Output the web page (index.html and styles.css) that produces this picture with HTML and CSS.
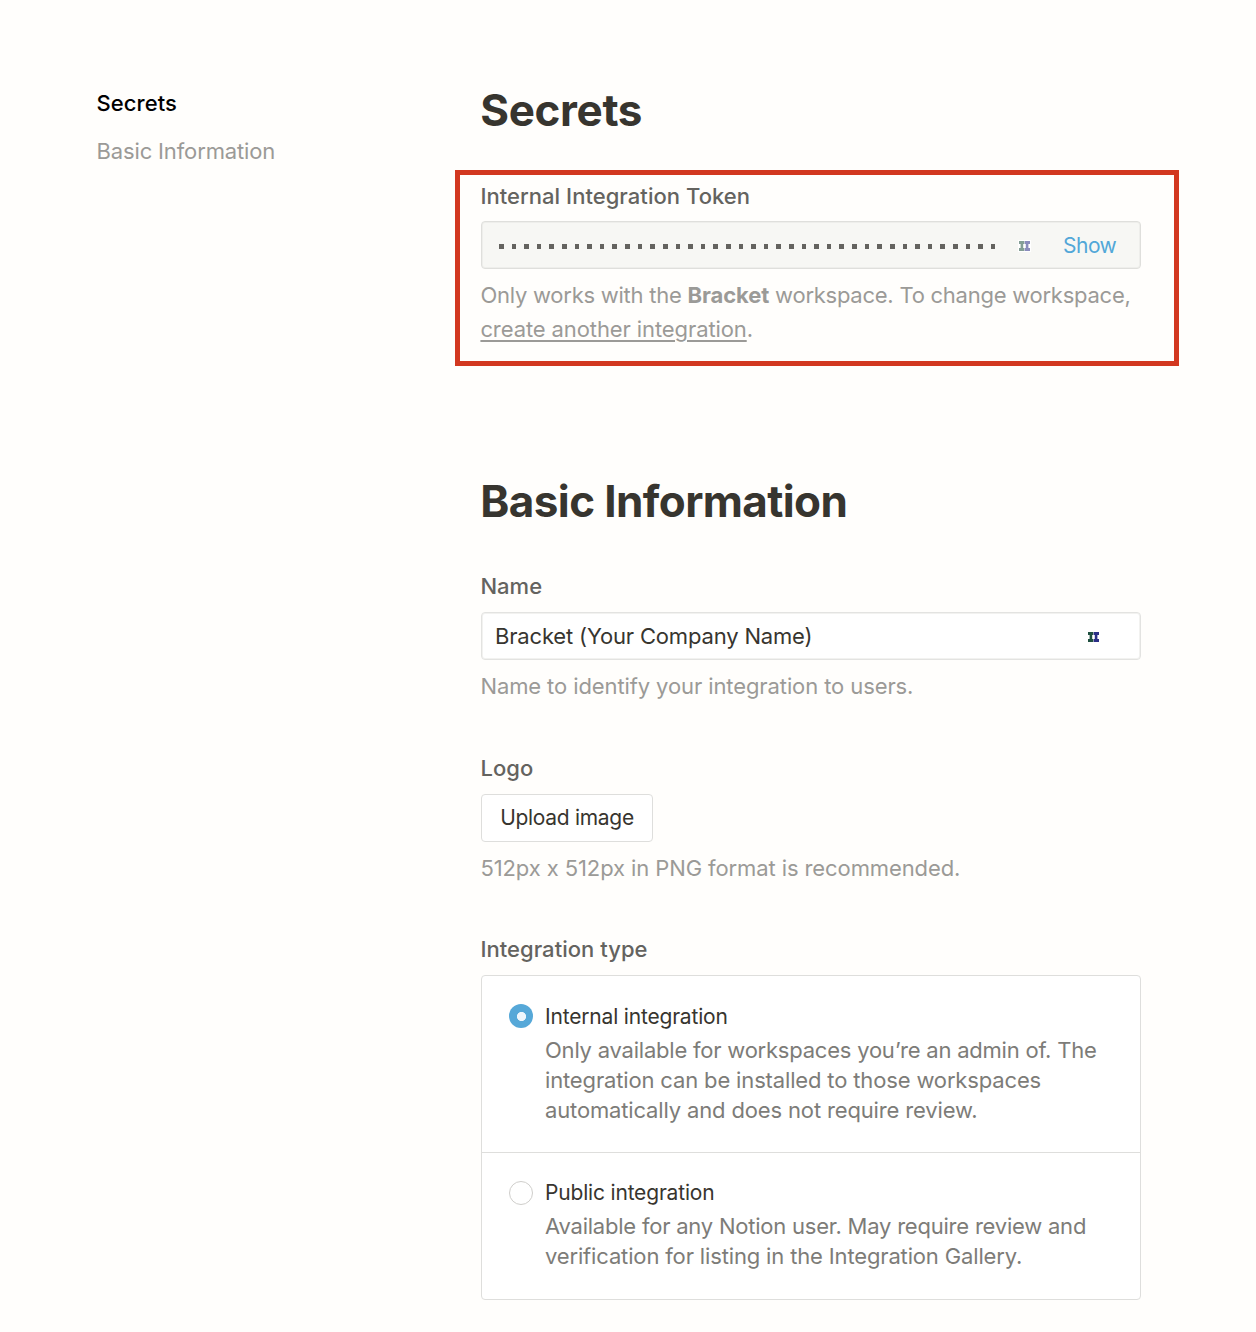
FILE: index.html
```html
<!DOCTYPE html>
<html lang="en">
<head>
<meta charset="utf-8">
<title>Integration settings</title>
<link rel="stylesheet" href="styles.css">
</head>
<body>
<div class="page">
  <nav class="sidebar">
    <a class="nav-link nav-link-active">Secrets</a>
    <a class="nav-link">Basic Information</a>
  </nav>
  <main class="content">
    <h1 class="title">Secrets</h1>
    <section class="callout">
      <div class="label">Internal Integration Token</div>
      <div class="field field-token">
        <span class="dots"></span>
        <span class="mark-tile">
          <svg class="mark" viewBox="0 0 11 10"><path fill="#1f4f3f" d="M0 0h5.300v3H4.200v4h1.100v3H0V7h1.600V3H0z"/><path fill="#2b2f86" d="M5.700 0H11v3H9.400v4H11v3H5.700V7h1.100V3H5.700z"/></svg>
        </span>
        <a class="show">Show</a>
      </div>
      <p class="help"><span class="help-workspace">Only works with the <b>Bracket</b> workspace. To change workspace,</span><br><a class="link">create another integration</a>.</p>
    </section>
    <h1 class="title title-basic">Basic Information</h1>
    <section class="group">
      <div class="label">Name</div>
      <div class="field">
        <span class="value">Bracket (Your Company Name)</span>
        <svg class="mark mark-name" viewBox="0 0 11 10"><path fill="#1f4f3f" d="M0 0h5.300v3H4.200v4h1.100v3H0V7h1.600V3H0z"/><path fill="#2b2f86" d="M5.700 0H11v3H9.400v4H11v3H5.700V7h1.100V3H5.700z"/></svg>
      </div>
      <p class="help">Name to identify your integration to users.</p>
    </section>
    <section class="group group-logo">
      <div class="label">Logo</div>
      <button class="upload">Upload image</button>
      <p class="help">512px x 512px in PNG format is recommended.</p>
    </section>
    <section class="group group-type">
      <div class="label">Integration type</div>
      <div class="options">
        <div class="option">
          <span class="radio radio-on"></span>
          <div class="option-text">
            <div class="option-title">Internal integration</div>
            <p class="option-desc"><span class="tight">Only available for workspaces you’re an admin of. The</span><br>integration can be installed to those workspaces<br>automatically and does not require review.</p>
          </div>
        </div>
        <div class="option option-public">
          <span class="radio"></span>
          <div class="option-text">
            <div class="option-title">Public integration</div>
            <p class="option-desc"><span class="tight">Available for any Notion user. May require review and</span><br>verification for listing in the Integration Gallery.</p>
          </div>
        </div>
      </div>
    </section>
  </main>
</div>
</body>
</html>
```
FILE: styles.css
```css
* { box-sizing: border-box; }
body {
  margin: 0;
  background: #fffefc;
  color: #37352f;
  font-family: Inter, "Liberation Sans", sans-serif;
  font-size: 22px;
  line-height: 34px;
}
p, h1 { margin: 0; }
.page { display: flex; height: 1332px; overflow: hidden; }
.sidebar {
  display: flex;
  flex-direction: column;
  gap: 14px;
  width: 480px;
  padding: 86px 0 0 96.500px;
}
.nav-link { color: #9b9a97; white-space: nowrap; letter-spacing: -0.14px; }
.nav-link-active { color: #000; font-weight: 500; letter-spacing: 0.06px; }
.content { width: 660px; margin-left: 1px; padding-top: 83px; white-space: nowrap; }
.title {
  margin-left: -0.700px;
  font-size: 44px;
  line-height: 54px;
  font-weight: 700;
  letter-spacing: -0.38px;
}
.title-basic { margin-top: 108px; letter-spacing: -0.6px; }
.callout {
  margin: 33px -38px 0 -26px;
  padding: 4px 33px 15px 21px;
  border: 5px solid #d23820;
}
.label { margin-left: -0.600px; color: #64635f; font-weight: 500; letter-spacing: 0.04px; }
.field {
  display: flex;
  align-items: center;
  height: 48px;
  margin-top: 9px;
  padding: 0 1px;
  border: 1px solid #e3e3e1;
  border-radius: 4px;
  background: #fff;
  box-shadow: inset 0 0 0 1px #f2f2f0;
}
.field-token {
  margin-top: 8px;
  background: #f7f7f4;
  border-color: #dfdfdc;
  box-shadow: inset 0 0 0 1px #eeeeeb;
}
.dots {
  width: 498px;
  height: 5px;
  margin: 2px 0 0 16px;
  background: repeating-linear-gradient(90deg, #64635f 0 4.600px, transparent 4.600px 12.610px);
}
.mark { width: 11px; height: 10px; }
.mark-name { margin-top: 1px; }
.mark-tile {
  display: flex;
  margin: 1px 0 0 21px;
  padding: 1px;
  background: #fff;
}
.mark-tile .mark { opacity: 0.55; }
.show { margin: 2px 0 0 32px; color: #52a7d8; font-size: 21px; letter-spacing: -0.5px; }
.help { margin: 9px 0 0 -0.600px; color: #9b9a97; letter-spacing: -0.1px; }
.help-workspace { letter-spacing: -0.25px; }
.help-workspace b { letter-spacing: -0.1px; }
.link {
  text-decoration: underline;
  text-decoration-thickness: 2px;
  text-underline-offset: 3px;
}
.title-basic + .group { margin-top: 41px; }
.value { flex: none; width: 605px; padding-left: 12px; letter-spacing: -0.17px; }
.group-logo { margin-top: 48px; }
.upload {
  display: block;
  width: 172px;
  height: 48px;
  margin-top: 9px;
  padding: 0;
  border: 1px solid #dededc;
  border-radius: 4px;
  background: #fff;
  color: #37352f;
  font: inherit;
  font-size: 21px;
  letter-spacing: -0.3px;
}
.group-type { margin-top: 47px; }
.options { margin-top: 9px; border: 1px solid #dededc; border-radius: 4px; background: #fff; }
.option { display: flex; gap: 12px; padding: 26px 27px 27px; line-height: 30px; }
.option-public { padding: 25px 27px 28px; border-top: 1px solid #dededc; }
.radio { width: 24px; height: 24px; margin-top: 2px; border: 1px solid #cfcecb; border-radius: 50%; }
.option-public .radio { margin-top: 3px; }
.radio-on {
  border: none;
  background: radial-gradient(circle at 12.500px 12.500px, #eef6fc 4.200px, #56a8d8 5px);
}
.option-title { font-size: 21px; letter-spacing: -0.18px; }
.option-desc { margin-top: 3px; color: #7d7c78; letter-spacing: -0.15px; }
.tight { letter-spacing: -0.22px; }
```
